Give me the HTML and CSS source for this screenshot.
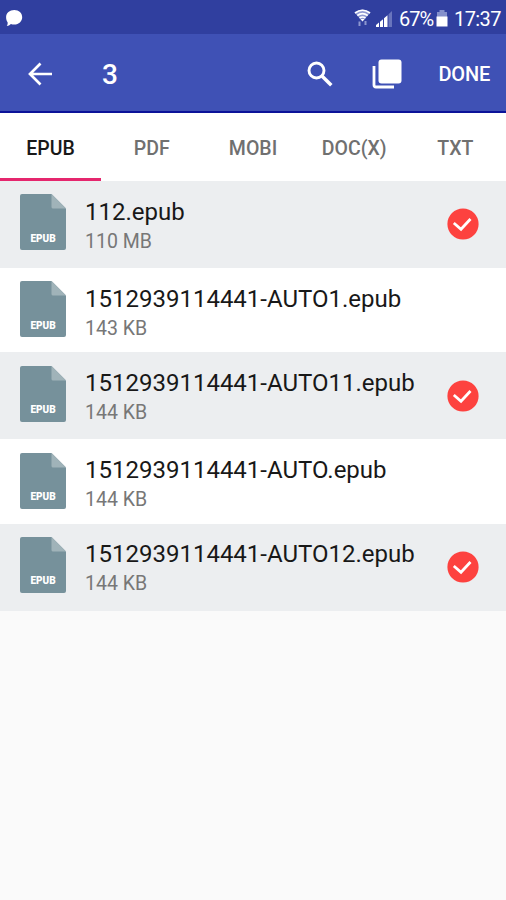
FILE: index.html
```
<!DOCTYPE html>
<html lang="en">
<head>
<meta charset="utf-8">
<title>Select files</title>
<link rel="stylesheet" href="styles.css">
</head>
<body>
<svg class="defs" width="0" height="0" aria-hidden="true">
  <symbol id="file" viewBox="0 0 46 56">
    <path fill="#76919b" d="M2 0H31.500L46 14.500V54a2 2 0 0 1-2 2H2a2 2 0 0 1-2-2V2a2 2 0 0 1 2-2z"/>
    <path fill="#a0b3b9" d="M31.500 0L46 14.500H33a1.500 1.500 0 0 1-1.500-1.500z"/>
  </symbol>
  <symbol id="check" viewBox="0 0 32 32">
    <circle cx="16" cy="16" r="15.600" fill="#fd423f"/>
    <path d="M6.800 15L14 21.200L23.500 11" fill="none" stroke="#fff" stroke-width="2.800"/>
  </symbol>
</svg>
<header>
  <div class="status">
    <svg class="bubble" width="18" height="17" viewBox="0 0 18 17"><path fill="#fff" d="M9.300 0c4.600 0 7.900 3.100 7.900 7.200s-3.400 7.300-7.900 7.300c-1.300 0-2.300-.2-3.400-.6C4.800 15 3.300 15.800 1.800 15.900c.8-1.200 1-2.200.8-3.700C1.600 10.900 1.100 9.400 1.100 7.200 1.100 3.100 4.700 0 9.300 0z"/></svg>
    <div class="indicators">
      <svg class="wifi" width="17" height="18" viewBox="0 0 17 18"><path fill="#8f99d2" d="M.5 3.500Q8.500-2.500 16.500 3.500L8.500 12.500z"/><path fill="none" stroke="#fff" stroke-width="1.600" d="M1 4Q8.500-1.400 16 4M3.300 6.500Q8.500 2.800 13.700 6.500M5.500 9Q8.500 6.900 11.500 9"/><path fill="#fff" d="M6.500 10h4L8.500 12.500z"/><path fill="none" stroke="#8d97cf" stroke-width="2" d="M5.500 12.500v4.500M11.500 12v4"/></svg>
      <svg class="signal" width="18" height="18" viewBox="0 0 18 18"><path fill="#fff" d="M1 17v-2l3-2.500V17zM5 17v-5.300l3-2.500V17zM9 17V8.300l3.500-3V17z"/><path fill="#6975bd" d="M13.500 17V4.300L17 1v16z"/></svg>
      <span class="percent">67%</span>
      <svg class="battery" width="12" height="18" viewBox="0 0 12 18"><path fill="#8490cb" d="M3.500 0h5v2H11v6H1V2h2.500z"/><path fill="#fff" d="M.5 6.500h11v10H.5z"/></svg>
      <span class="clock">17:37</span>
    </div>
  </div>
  <div class="toolbar">
    <svg class="back" width="24" height="24" viewBox="0 0 24 24" fill="none" stroke="#fff" stroke-width="2.700"><path d="M12.500 1.500L2 12l10.500 10.500M2 12h22"/></svg>
    <span class="count">3</span>
    <svg class="search" width="28" height="28" viewBox="0 0 28 28" fill="none" stroke="#fff"><circle cx="10.500" cy="10.500" r="7.500" stroke-width="2.900"/><path stroke-width="3.500" d="M16.200 16.200L25.300 25.300"/></svg>
    <svg class="copy" width="30" height="30" viewBox="0 0 30 30"><rect x="6.500" y=".5" width="23" height="24" rx="3" fill="#fff"/><path d="M2 7v19a2 2 0 0 0 2 2h18" fill="none" stroke="#fff" stroke-width="2.800"/></svg>
    <span class="done">DONE</span>
  </div>
</header>
<nav class="tabs">
  <span class="tab active">EPUB</span><span class="tab">PDF</span><span class="tab">MOBI</span><span class="tab">DOC(X)</span><span class="tab">TXT</span>
</nav>
<ul class="files">
  <li class="file selected"><div class="type"><svg width="46" height="56"><use href="#file"/></svg><span>EPUB</span></div><div class="info"><div class="name">112.epub</div><div class="size">110 MB</div></div><svg class="check" width="32" height="32"><use href="#check"/></svg></li>
  <li class="file"><div class="type"><svg width="46" height="56"><use href="#file"/></svg><span>EPUB</span></div><div class="info"><div class="name">1512939114441-AUTO1.epub</div><div class="size">143 KB</div></div></li>
  <li class="file selected"><div class="type"><svg width="46" height="56"><use href="#file"/></svg><span>EPUB</span></div><div class="info"><div class="name">1512939114441-AUTO11.epub</div><div class="size">144 KB</div></div><svg class="check" width="32" height="32"><use href="#check"/></svg></li>
  <li class="file"><div class="type"><svg width="46" height="56"><use href="#file"/></svg><span>EPUB</span></div><div class="info"><div class="name">1512939114441-AUTO.epub</div><div class="size">144 KB</div></div></li>
  <li class="file selected"><div class="type"><svg width="46" height="56"><use href="#file"/></svg><span>EPUB</span></div><div class="info"><div class="name">1512939114441-AUTO12.epub</div><div class="size">144 KB</div></div><svg class="check" width="32" height="32"><use href="#check"/></svg></li>
</ul>
</body>
</html>
```
FILE: styles.css
```
* { box-sizing: border-box; }
body { margin: 0; height: 900px; overflow: hidden; background: #fafafa; font-family: Roboto, sans-serif; color: #181818; }
svg { display: block; flex: none; }
.defs { position: absolute; }
.status { height: 34px; background: #303f9f; display: flex; justify-content: space-between; padding: 0 6px 0 5px; color: #fff; }
.bubble { margin-top: 10px; }
.indicators { display: flex; align-items: flex-start; font-size: 20px; line-height: 38px; }
.wifi { margin: 9px 4px 0 0; }
.signal { margin: 9.500px 6px 0 0; }
.percent { width: 34px; letter-spacing: -1px; }
.battery { margin: 9.500px 6px 0 3px; }
.clock { width: 46px; letter-spacing: -.6px; }
.toolbar { height: 79px; background: #3f51b5; border-bottom: 2px solid #0b1399; display: flex; align-items: center; color: #fff; padding: 2.500px 16px 0 28px; }
.count { margin-left: 50px; width: 20px; padding-top: 2px; font-size: 28px; font-weight: 500; }
.search { margin-left: 184px; }
.copy { margin-left: 38px; }
.done { margin-left: auto; font-size: 20px; font-weight: 500; letter-spacing: -.2px; }
.tabs { height: 68px; background: #fff; display: grid; grid-template-columns: repeat(5, 1fr); grid-template-rows: 68px; }
.tab { height: 68px; text-align: center; font-size: 19.500px; font-weight: 500; line-height: 71px; color: #707070; }
.active { color: #181818; border-bottom: 3px solid #e5266d; }
.files { margin: 0; padding: 0; list-style: none; }
.file { height: 84.300px; padding: 13.300px 27px 0 20px; background: #fff; display: flex; align-items: flex-start; }
.selected { height: 87px; background: #eceef0; }
.type { display: grid; width: 46px; height: 56px; }
.type svg, .type span { grid-area: 1 / 1; }
.type span { z-index: 1; align-self: end; text-align: center; color: #fff; font-size: 10px; line-height: 12px; font-weight: 900; margin-bottom: 5.600px; }
.info { margin: .4px 0 0 19px; flex: 1; white-space: nowrap; }
.name { font-size: 24px; line-height: 35px; }
.size { font-size: 19.500px; line-height: 24px; color: #777; }
.check { margin-top: 14px; }
```
